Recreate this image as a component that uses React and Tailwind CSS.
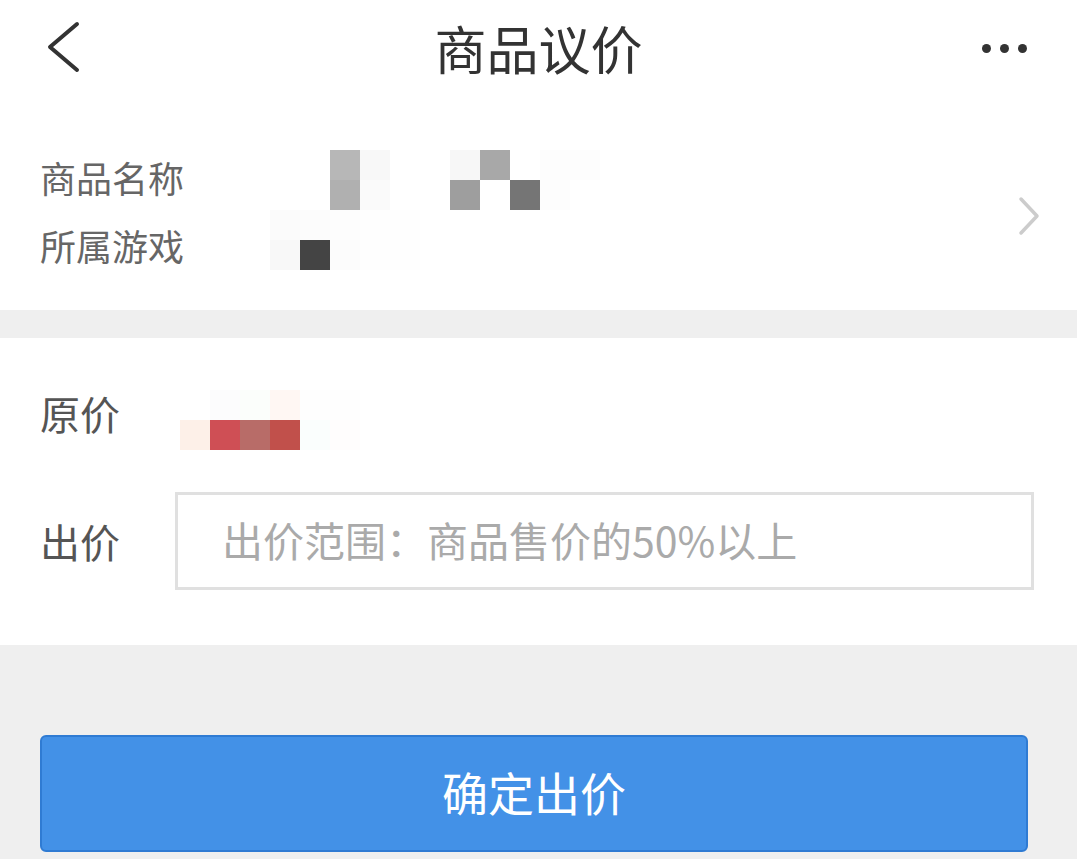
import React from 'react';

const cjk = { fontFamily: '"Noto Sans CJK SC", "Noto Sans", sans-serif' };

// mosaic cells, 30px each, null = empty
const nameCells = [
  [null, null, null, 'bg-[#b7b7b7]', 'bg-[#f8f8f8]', null, null, 'bg-[#f7f7f7]', 'bg-[#a8a8a8]', null, 'bg-[#fdfdfd]', 'bg-[#fdfdfd]'],
  [null, null, null, 'bg-[#b0b0b0]', 'bg-[#fafafa]', null, null, 'bg-[#9e9e9e]', null, 'bg-[#757575]', 'bg-[#fdfdfd]', null],
];
const gameCells = [
  [null, 'bg-[#fbfbfb]', 'bg-[#fcfcfc]', 'bg-[#fdfdfd]', 'bg-[#fefefe]', 'bg-[#fefefe]'],
  [null, 'bg-[#f8f8f8]', 'bg-[#444444]', 'bg-[#fcfcfc]', 'bg-[#fefefe]', 'bg-[#fefefe]'],
];
const priceCells = [
  [null, 'bg-[#fcfcfd]', 'bg-[#fbfefb]', 'bg-[#fff7f3]', 'bg-[#fefefe]', 'bg-[#fefefe]'],
  ['bg-[#fdf0e8]', 'bg-[#cf4f55]', 'bg-[#b86c68]', 'bg-[#c1504b]', 'bg-[#fafefd]', 'bg-[#fffdfd]'],
];

const Mosaic = ({ rows }) => (
  <div className="flex flex-col">
    {rows.map((r, i) => (
      <div key={i} className="flex">
        {r.map((c, j) => (
          <div key={j} className={`w-[30px] h-[30px] ${c || ''}`} />
        ))}
      </div>
    ))}
  </div>
);

export default function App() {
  return (
    <div className="w-[1077px] h-[859px] overflow-hidden bg-[#efefef]" style={cjk}>
      {/* header */}
      <div className="bg-white h-[100px] flex items-center justify-between px-[44px] relative">
        <svg width="40" height="56" viewBox="0 0 40 56" className="-mt-[4px]">
          <path d="M33 4 L6 27 L33 50" fill="none" stroke="#333" strokeWidth="4" strokeLinecap="round" strokeLinejoin="round" />
        </svg>
        <div className="absolute left-0 right-0 top-0 h-[100px] flex items-center justify-center pointer-events-none">
          <span className="text-[52px] leading-none text-[#333] -mt-[4px]">商品议价</span>
        </div>
        <div className="flex gap-[9px] mr-[6px] -mt-[4px]">
          <span className="w-[9px] h-[9px] rounded-full bg-[#333]" />
          <span className="w-[9px] h-[9px] rounded-full bg-[#333]" />
          <span className="w-[9px] h-[9px] rounded-full bg-[#333]" />
        </div>
      </div>

      {/* product info */}
      <div className="bg-white h-[210px] pt-[46px] pl-[40px] pr-[36px] flex items-start">
        <div className="flex-1">
          <div className="h-[66px] flex items-center">
            <span className="w-[200px] text-[36px] leading-none text-[#666] -mt-[4px]">商品名称</span>
            <div className="mt-[2px]">
              <Mosaic rows={nameCells} />
            </div>
          </div>
          <div className="h-[66px] flex items-center">
            <span className="w-[200px] text-[36px] leading-none text-[#666]">所属游戏</span>
            <div className="-mt-[10px]">
              <Mosaic rows={gameCells} />
            </div>
          </div>
        </div>
        <svg width="24" height="40" viewBox="0 0 24 40" className="mt-[50px]">
          <path d="M4 3 L20 20 L4 37" fill="none" stroke="#cccccc" strokeWidth="3.5" strokeLinecap="round" strokeLinejoin="round" />
        </svg>
      </div>

      {/* price section */}
      <div className="bg-white mt-[28px] pt-[42px] pb-[55px] pl-[40px] pr-[43px]">
        <div className="h-[80px] flex items-center">
          <span className="w-[140px] text-[40px] leading-none text-[#555] -mt-[14px]">原价</span>
          <Mosaic rows={priceCells} />
        </div>
        <div className="mt-[32px] flex items-center">
          <span className="w-[135px] text-[40px] leading-none text-[#555]">出价</span>
          <div className="flex-1 h-[98px] border-[3px] border-[#e0e0e0] flex items-center pl-[44px]">
            <span className="text-[41px] leading-none text-[#aaaaaa] whitespace-nowrap -mt-[4px]">出价范围：商品售价的50%以上</span>
          </div>
        </div>
      </div>

      {/* button */}
      <div className="pt-[90px] pl-[40px] pr-[49px]">
        <button className="w-full h-[117px] rounded-[6px] bg-[#4391e7] border-2 border-[#2f7bd3] flex items-center justify-center">
          <span className="text-[46px] leading-none text-white -mt-[6px]">确定出价</span>
        </button>
      </div>
    </div>
  );
}
